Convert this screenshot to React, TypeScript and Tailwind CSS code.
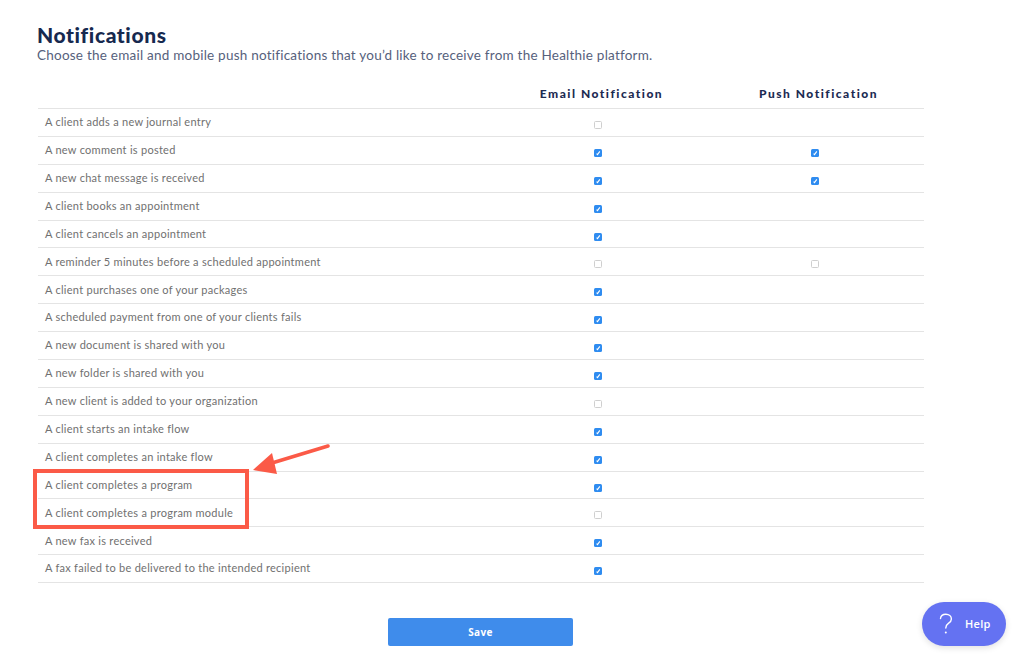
const rows: [string, boolean, boolean | null][] = [
  ["A client adds a new journal entry", false, null],
  ["A new comment is posted", true, true],
  ["A new chat message is received", true, true],
  ["A client books an appointment", true, null],
  ["A client cancels an appointment", true, null],
  ["A reminder 5 minutes before a scheduled appointment", false, false],
  ["A client purchases one of your packages", true, null],
  ["A scheduled payment from one of your clients fails", true, null],
  ["A new document is shared with you", true, null],
  ["A new folder is shared with you", true, null],
  ["A new client is added to your organization", false, null],
  ["A client starts an intake flow", true, null],
  ["A client completes an intake flow", true, null],
  ["A client completes a program", true, null],
  ["A client completes a program module", false, null],
  ["A new fax is received", true, null],
  ["A fax failed to be delivered to the intended recipient", true, null],
];

function Check({ on }: { on: boolean }) {
  if (!on) {
    return <span className="block w-[8px] h-[8px] rounded-[1.5px] border border-[#cfcfcf] bg-white mt-[1px]" />;
  }
  return (
    <span className="flex items-center justify-center w-[8px] h-[8px] rounded-[1.5px] bg-[#2f8cf0] mt-[1px]">
      <svg width="6" height="6" viewBox="0 0 6 6" fill="none">
        <path d="M1.6 3.6 L2.5 4.6 L4.8 1.4" stroke="white" strokeWidth="1.1" />
      </svg>
    </span>
  );
}

export default function App() {
  return (
    <div className="relative w-[1024px] h-[666px] overflow-hidden bg-white font-['Lato','Liberation_Sans',sans-serif]">
      <div className="pl-[37px] pt-[22px]">
        <h1 className="text-[21px] leading-[25px] font-black text-[#16294f] tracking-[0.6px]">Notifications</h1>
        <p className="text-[13.5px] leading-[16px] text-[#56617c] tracking-[0.23px]">
          Choose the email and mobile push notifications that you’d like to receive from the Healthie platform.
        </p>
      </div>

      <div className="ml-[38px] w-[886px] mt-[19px]">
        <div className="grid grid-cols-[451px_217px_218px] h-[27px] items-center border-b border-[#e4e4e4] text-[12px] font-black tracking-[1.5px] text-[#1c2b52] text-center">
          <span />
          <span className="pb-[3px] pl-[8px]">Email Notification</span>
          <span className="pb-[3px] pl-[7px]">Push Notification</span>
        </div>
        {rows.map(([label, email, push]) => (
          <div
            key={label}
            className="grid grid-cols-[451px_217px_218px] h-[27.9px] items-center border-b border-[#e4e4e4]"
          >
            <span className="pl-[7px] text-[11px] tracking-[0.27px] text-[#707070]">{label}</span>
            <span className="flex justify-center pt-[4px]"><Check on={email} /></span>
            <span className="flex justify-center pt-[4px]">{push !== null && <Check on={push} />}</span>
          </div>
        ))}
      </div>

      <div className="flex justify-start ml-[388px] mt-[35px]">
        <button className="w-[185px] h-[28px] rounded-[2px] bg-[#3f8ceb] text-white text-[10px] font-bold tracking-[0.4px] font-['Open_Sans','Liberation_Sans',sans-serif]">
          Save
        </button>
      </div>

      {/* Annotation */}
      <div className="absolute left-[33px] top-[469px] w-[216px] h-[60px] border-[4px] border-[#fb5a47]" />
      <svg className="absolute left-[250px] top-[442px]" width="84" height="34" viewBox="0 0 84 34" fill="none">
        <path d="M78 4 L22 21" stroke="#fb5a47" strokeWidth="3.6" strokeLinecap="round" />
        <path d="M3 28 L22 11 L27 32 Z" fill="#fb5a47" />
      </svg>

      {/* Help */}
      <button className="absolute left-[922px] top-[602px] w-[84px] h-[44px] rounded-[22px] bg-[#6472f2] shadow-[0_2px_6px_rgba(0,0,0,0.12)] flex items-center text-white font-['Open_Sans','Liberation_Sans',sans-serif]">
        <svg className="ml-[17px]" width="14" height="22" viewBox="0 0 14 22" fill="none">
          <path d="M1.5 5.5 C1.8 2.8 4 1.2 6.8 1.2 C10 1.2 12.4 3.2 12.4 5.9 C12.4 8 11.2 9.2 9.4 10.4 C7.6 11.6 6.8 12.6 6.8 15" stroke="white" strokeWidth="1.4" strokeLinecap="round" />
          <circle cx="6.8" cy="19.6" r="1" fill="white" />
        </svg>
        <span className="ml-[12px] text-[11px] font-semibold tracking-[0.3px]">Help</span>
      </button>
    </div>
  );
}
